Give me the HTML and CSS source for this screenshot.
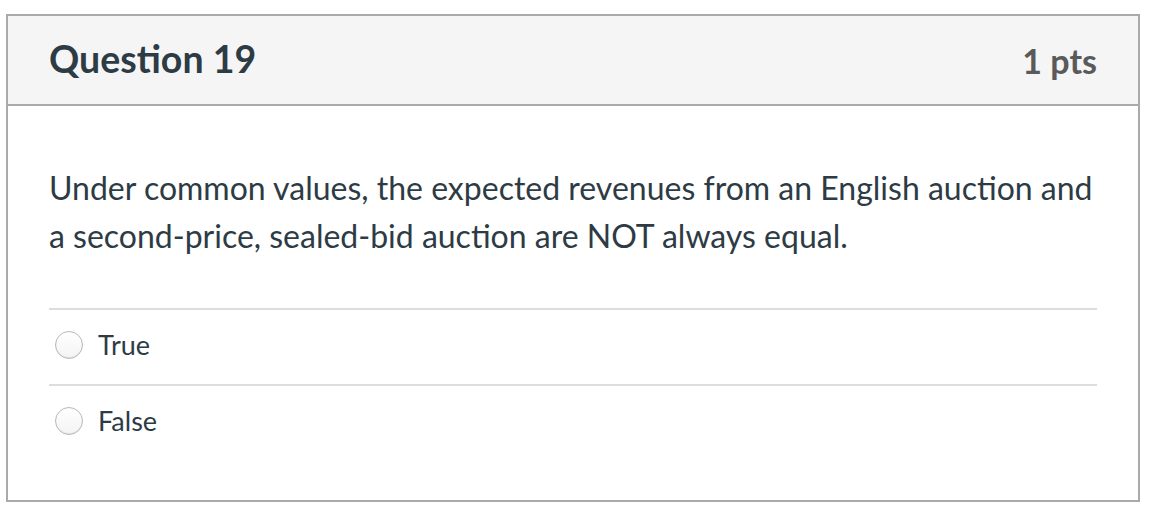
FILE: index.html
```html
<!DOCTYPE html>
<html>
<head>
<meta charset="utf-8">
<link rel="stylesheet" href="styles.css">
</head>
<body>
<div class="panel">
  <div class="header">
    <span class="title">Question 19</span>
    <span class="pts">1 pts</span>
  </div>
  <div class="body">
    <p class="text">Under common values, the expected revenues from an English auction and a second-price, sealed-bid auction are NOT always equal.</p>
    <div class="answers">
      <div class="answer"><span class="radio"></span><span class="label">True</span></div>
      <div class="answer"><span class="radio"></span><span class="label">False</span></div>
    </div>
  </div>
</div>
</body>
</html>
```
FILE: styles.css
```css
html, body {
  margin: 0;
  background: #fff;
}
body {
  padding: 14px 0 0 6px;
  font-family: Lato, "Open Sans", sans-serif;
  color: #2d3b45;
}
.panel {
  width: 1130px;
  height: 484px;
  border: 2px solid #aaaaaa;
  box-sizing: content-box;
}
.header {
  height: 88px;
  background: #f5f5f5;
  border-bottom: 2px solid #aaaaaa;
  display: flex;
  align-items: center;
  justify-content: space-between;
  padding: 0 41px;
}
.title {
  font-size: 37.5px;
  font-weight: 700;
  color: #2d3b45;
  margin-top: -3px;
}
.pts {
  font-size: 34px;
  font-weight: 700;
  color: #5a5a5a;
}
.body {
  padding: 0 41px;
}
.text {
  margin: 0;
  padding-top: 58px;
  font-size: 32px;
  line-height: 48px;
}
.answers {
  margin-top: 48px;
}
.answer {
  border-top: 2px solid #dddddd;
  height: 74px;
  display: flex;
  align-items: center;
}
.radio {
  width: 26px;
  height: 26px;
  border-radius: 50%;
  border: 1px solid #b8b8b8;
  background: linear-gradient(#ffffff, #f4f4f4);
  box-shadow: inset 0 -1px 1px rgba(0,0,0,0.07);
  margin-left: 6px;
  margin-right: 15px;
  margin-top: -4px;
  flex: none;
}
.label {
  font-size: 27px;
  margin-top: -6px;
}
```
